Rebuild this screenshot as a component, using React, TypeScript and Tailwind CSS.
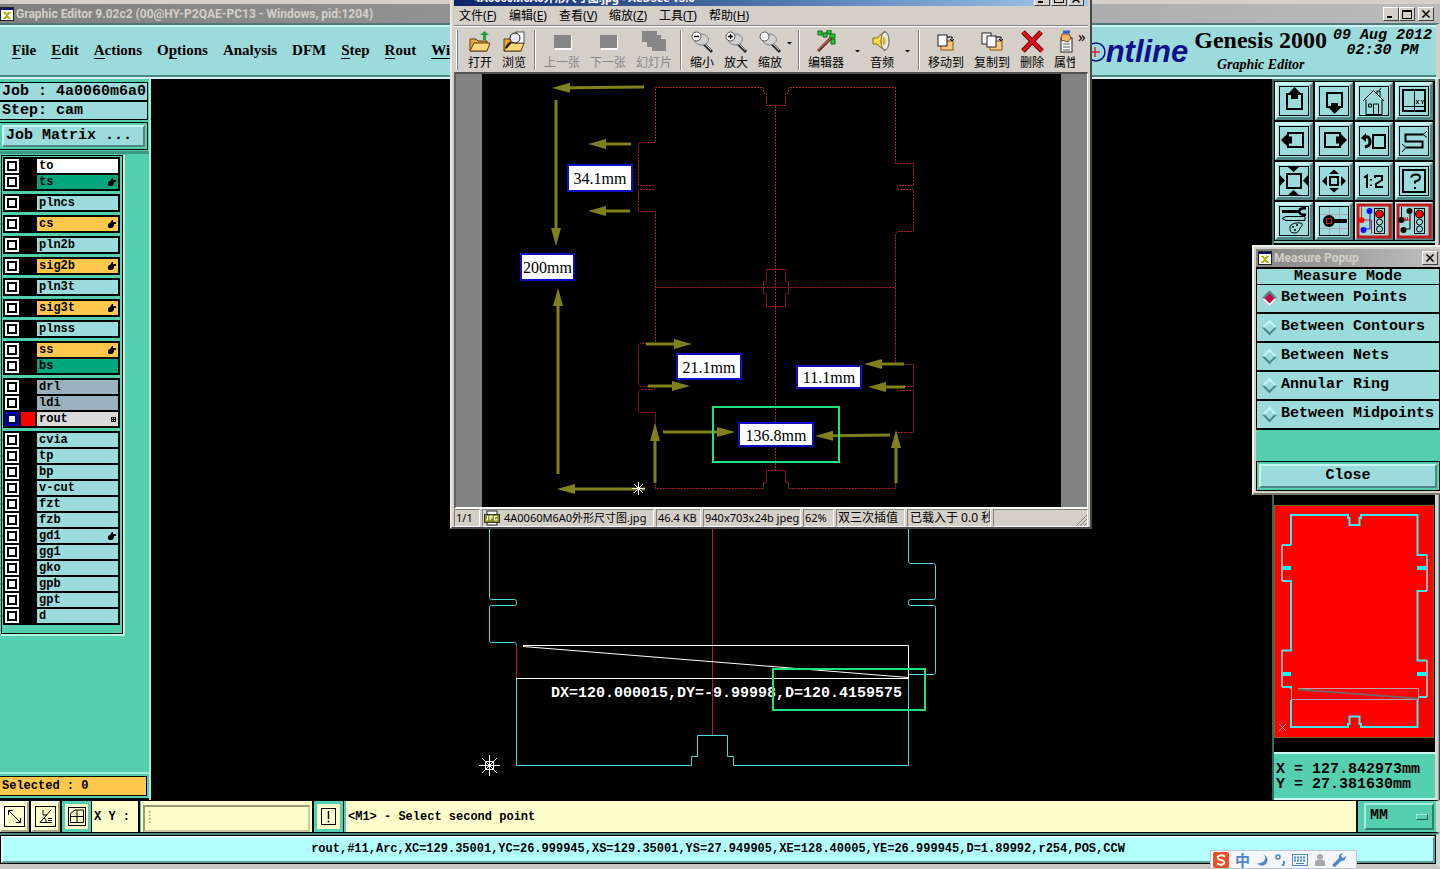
import React from "react";

const MONO = "font-['Liberation_Mono',monospace] font-bold";
const SERIF = "font-['Liberation_Serif',serif] font-bold";
const CJK = "font-['Noto_Sans','Noto_Sans_CJK_SC',sans-serif]";
const RAISED = "border-t-[#c9f5f5] border-l-[#c9f5f5] border-r-[#4e8686] border-b-[#4e8686]";

type Tone = "white" | "green" | "cyan" | "amber" | "slate" | "silver";
type Layer = { name: string; tone: Tone; mark?: "hand" | "grid"; active?: boolean };

const TONES: Record<Tone, string> = {
  white: "bg-white",
  green: "bg-[#00a67c]",
  cyan: "bg-[#9bdbdb]",
  amber: "bg-[#ffc84c]",
  slate: "bg-[#9ab2be]",
  silver: "bg-[#dadada]",
};

const GROUPS: Layer[][] = [
  [{ name: "to", tone: "white" }, { name: "ts", tone: "green", mark: "hand" }],
  [{ name: "plncs", tone: "cyan" }],
  [{ name: "cs", tone: "amber", mark: "hand" }],
  [{ name: "pln2b", tone: "cyan" }],
  [{ name: "sig2b", tone: "amber", mark: "hand" }],
  [{ name: "pln3t", tone: "cyan" }],
  [{ name: "sig3t", tone: "amber", mark: "hand" }],
  [{ name: "plnss", tone: "cyan" }],
  [{ name: "ss", tone: "amber", mark: "hand" }, { name: "bs", tone: "green" }],
  [
    { name: "drl", tone: "slate" },
    { name: "ldi", tone: "slate" },
    { name: "rout", tone: "silver", mark: "grid", active: true },
  ],
  [
    { name: "cvia", tone: "cyan" },
    { name: "tp", tone: "cyan" },
    { name: "bp", tone: "cyan" },
    { name: "v-cut", tone: "cyan" },
    { name: "fzt", tone: "cyan" },
    { name: "fzb", tone: "cyan" },
    { name: "gd1", tone: "cyan", mark: "hand" },
    { name: "gg1", tone: "cyan" },
    { name: "gko", tone: "cyan" },
    { name: "gpb", tone: "cyan" },
    { name: "gpt", tone: "cyan" },
    { name: "d", tone: "cyan" },
  ],
];

function AppGlyph() {
  return (
    <svg className="h-[14px] w-[14px] shrink-0" viewBox="0 0 14 14" shapeRendering="crispEdges">
      <rect width="14" height="14" fill="#fff" />
      <rect width="14" height="3" fill="#10106c" />
      <rect x=".5" y=".5" width="13" height="13" fill="none" stroke="#222" />
      <path d="M4 5l6 7M10 5l-6 7" stroke="#b4b41c" strokeWidth="2" />
    </svg>
  );
}

function WinButton({ label, children }: { label: string; children: React.ReactNode }) {
  return (
    <button
      aria-label={label}
      className="flex h-[14px] w-4 items-center justify-center border border-t-white border-l-white border-r-[#404040] border-b-[#404040] bg-[#d4d0c8]"
    >
      <svg className="h-[10px] w-[12px]" viewBox="0 0 12 10" fill="none" stroke="#000" shapeRendering="crispEdges">
        {children}
      </svg>
    </button>
  );
}

const CLOSE_X = <path d="M2.500 1.500l7 7M9.500 1.500l-7 7" strokeWidth="1.600" shapeRendering="auto" />;

function TitleBar() {
  return (
    <div className="flex h-[23px] items-center gap-[2px] border-t-4 border-[#d4d0c8] bg-linear-to-r from-[#808080] to-[#bcbcbc] pr-[6px]">
      <AppGlyph />
      <span className="flex-1 font-['Roboto',sans-serif] text-[12px] font-bold leading-[18px] whitespace-nowrap text-[#d4d0c8]">
        Graphic Editor 9.02c2 (00@HY-P2QAE-PC13 - Windows, pid:1204)
      </span>
      <div className="flex">
        <WinButton label="Minimize"><path d="M2 8h5" strokeWidth="2" /></WinButton>
        <WinButton label="Maximize"><path d="M1.500 1v8h9V1M1 1h10" /><path d="M1 2h10" /></WinButton>
        <span className="w-[3px]" />
        <WinButton label="Close">{CLOSE_X}</WinButton>
      </div>
    </div>
  );
}

const MENU: [string, string, string][] = [
  ["", "F", "ile"],
  ["", "E", "dit"],
  ["", "A", "ctions"],
  ["O", "p", "tions"],
  ["Analysis", "", ""],
  ["DFM", "", ""],
  ["", "S", "tep"],
  ["", "R", "out"],
  ["", "Wi", "ndows"],
];

function Header() {
  return (
    <header className="flex h-14 items-start border-t-2 border-r-4 border-b-2 border-t-[#4e7a7a] border-r-[#d4d0c8] border-b-[#d8f4f4] bg-[#9bdbdb]">
      <div className="flex h-full w-full items-start border-t-2 border-b-2 border-t-[#c9f5f5] border-b-[#4e8686]">
        <nav className="flex flex-1 gap-[15px] pt-[13px] pl-3">
          {MENU.map(([a, key, b]) => (
            <a key={a + key + b} href="#" className={`${SERIF} text-[15px] leading-5 text-black`}>
              {a}
              <span className="border-b border-black">{key}</span>
              {b}
            </a>
          ))}
        </nav>
        <div className="flex items-center pt-[5px] text-[31px] leading-[40px] font-bold text-[#10108c] italic font-['Liberation_Sans',sans-serif]">
          <span>Fr</span>
          <svg className="h-6 w-6" viewBox="0 0 24 24" fill="none">
            <circle cx="14" cy="12" r="9" stroke="#10108c" strokeWidth="1.500" />
            <path d="M8 12h10M13 7v10" stroke="#e02020" strokeWidth="1.500" />
          </svg>
          <span>ntline</span>
        </div>
        <div className="ml-[6px] flex flex-col items-center text-black">
          <span className={`${SERIF} text-[24px] leading-[27px]`}>Genesis 2000</span>
          <span className={`${SERIF} text-[14px] leading-[22px] italic`}>Graphic Editor</span>
        </div>
        <div className={`${MONO} mr-1 ml-[6px] pt-px text-center text-[15px] leading-[15px] text-black italic`}>
          <div>09 Aug 2012</div>
          <div>02:30 PM</div>
        </div>
      </div>
    </header>
  );
}

function LayerRow({ layer }: { layer: Layer }) {
  return (
    <label className="flex h-[14px] items-center gap-[2px]">
      <input
        type="checkbox"
        aria-label={layer.name}
        className={
          layer.active
            ? "h-[14px] w-[14px] shrink-0 appearance-none bg-white shadow-[inset_0_0_0_2px_#0000b8,inset_0_0_0_4px_#000060]"
            : "h-[14px] w-[14px] shrink-0 appearance-none bg-white shadow-[inset_0_0_0_2px_#fff,inset_0_0_0_4px_#000]"
        }
      />
      <span className={layer.active ? "h-[14px] w-[14px] bg-[#ff0000]" : "h-[14px] w-[14px] bg-black"} />
      <span className={`${MONO} ${TONES[layer.tone]} flex h-[14px] flex-1 items-center justify-between px-[2px] text-[12px] leading-[14px] text-black`}>
        {layer.name}
        {layer.mark === "hand" && (
          <svg className="h-2 w-2" viewBox="0 0 8 8">
            <path d="M0 4l2-1 2-3h1v2h3v2H6v2L4 8H1L0 7z" fill="#000" />
          </svg>
        )}
        {layer.mark === "grid" && (
          <svg className="h-[5px] w-[5px]" viewBox="0 0 5 5" fill="none" stroke="#000" shapeRendering="crispEdges">
            <path d="M.5.5h4v4h-4zM.5 2.500h4M2.500.5v4" />
          </svg>
        )}
      </span>
    </label>
  );
}

function LayerPanel() {
  return (
    <aside className="flex w-[151px] shrink-0 flex-col border-r-2 border-[#a5ecdc] bg-[#54cfb0] pt-[3px] text-black">
      <div className={`${MONO} mr-px text-[15px] leading-[17px]`}>
        <div className="border border-l-0 border-black bg-[#9bdbdb] pl-[2px]">Job : 4a0060m6a0</div>
        <div className="border border-l-0 border-black bg-[#9bdbdb] pl-[2px]">Step: cam</div>
      </div>
      <div className="mt-[2px] mr-px border border-l-0 border-black p-[2px]">
        <button className={`${MONO} ${RAISED} block w-full border-2 bg-[#9bdbdb] pl-[2px] text-left text-[15px] leading-[18px]`}>
          Job Matrix ...
        </button>
      </div>
      <div className="mt-px h-[3px] bg-[#3b9682]" />
      <div className="mt-px ml-px w-[124px] border-r-2 border-b-2 border-[#b5f2e6]">
        <div className="flex flex-col gap-[3px] border border-black p-px pr-[2px] pb-[8px]">
          {GROUPS.map((group) => (
            <div key={group[0].name} className="flex flex-col gap-[2px] bg-black p-[2px]">
              {group.map((layer) => (
                <LayerRow key={layer.name} layer={layer} />
              ))}
            </div>
          ))}
        </div>
      </div>
      <div className="mt-auto border-t-2 border-b-2 border-t-[#a5ecdc] border-b-black pt-[2px] pb-[2px]">
        <div className={`${MONO} mr-[2px] border border-l-0 border-black bg-[#ffc84c] pl-[2px] text-[12px] leading-[18px]`}>Selected : 0</div>
      </div>
    </aside>
  );
}

function Canvas() {
  return (
    <svg className="block min-w-0 flex-1 bg-black" viewBox="151 79 1121 721" preserveAspectRatio="xMidYMid slice" fill="none">
      <g stroke="#4fd8d8" shapeRendering="geometricPrecision">
        <path d="M489.500 500V597.500q0 2 2 2H514.500q2 0 2 2v2q0 2-2 2H491.500q-2 0-2 2V640.500q0 2 2 2H514.500q2 0 2 3" />
        <path d="M516.500 678V765.500H691.500V756.500H697.500V735.500H727.500V756.500H733.500V765.500H908.500V675" />
        <path d="M908.500 500V561.500q0 2 2 2H933.500q2 0 2 2V597.500q0 2-2 2H910.500q-2 0-2 2v2q0 2 2 2H933.500q2 0 2 2V672.500q0 2-2 2H908.500" />
      </g>
      <path d="M712.500 500V735M516.500 646V678" stroke="#b82020" />
      <path d="M523 645.500H908.500V678.500H516.500" stroke="#fff" />
      <path d="M523 646.500L908.500 677.500" stroke="#fff" />
      <text x="551" y="697" fill="#fff" fontSize="15" fontWeight="700" fontFamily="Liberation Mono, monospace">
        DX=120.000015,DY=-9.99998,D=120.4159575
      </text>
      <rect x="773" y="669" width="152" height="41" stroke="#1ee27c" strokeWidth="2" />
      <path d="M479 765.500h21M489.500 755v21M482 758l15 15M497 758l-15 15M485 761.500h9M485 769.500h9M485.500 761v9M493.500 761v9" stroke="#fff" />
    </svg>
  );
}

const FRAME = <rect x="4.500" y="4.500" width="29" height="29" strokeWidth="1" />;
const TOOLS: { label: string; alert?: boolean; art: React.ReactNode }[] = [
  { label: "Pan up", art: <><rect x="12" y="12" width="15" height="15" strokeWidth="2" /><path d="M19.500 5l6 6h-2.500v6h-7v-6H14z" fill="#000" stroke="none" /></> },
  { label: "Pan down", art: <><rect x="12" y="11" width="15" height="14" strokeWidth="2" /><path d="M19.500 32l6-6h-2.500v-5h-7v5H14z" fill="#000" stroke="none" /></> },
  { label: "Home", art: <><path d="M8 19L18.500 8.500 29 19M11 17.500v15h16v-15M22 12V9h3v6M25 8q0-2 1-2M18.500 32V22h5v10M13.500 22h3v3h-3z" /></> },
  { label: "Coordinates", art: <><rect x="8" y="8" width="22" height="21" strokeWidth="2" /><path d="M19.500 8v21M8 24.500h22" /><path d="M21 18l3 4M24 18l-3 4M26 18l1.500 2L29 18M27.500 20v2" /></> },
  { label: "Pan left", art: <><rect x="13" y="11" width="15" height="14" strokeWidth="2" /><path d="M6 18l6-6v2.500h5v7h-5V24z" fill="#000" stroke="none" /></> },
  { label: "Pan right", art: <><rect x="10" y="11" width="15" height="14" strokeWidth="2" /><path d="M32 18l-6-6v2.500h-5v7h5V24z" fill="#000" stroke="none" /></> },
  { label: "Previous view", art: <><rect x="18" y="13" width="12" height="13" strokeWidth="2" /><path d="M10 15q5-1 5 5 0 4-5 5" strokeWidth="3" /><path d="M6 16l5-5v9z" fill="#000" stroke="none" /></> },
  { label: "Serpentine", art: <><path d="M28 12.500H10.500v7H27.500v6H11" strokeWidth="2" /><path d="M28 12.500l4-3.500M28 12.500l4 3M11 25.500L7 22M11 25.500L7 30" /></> },
  { label: "Zoom in", art: <><rect x="12" y="12" width="14" height="14" strokeWidth="2" /><path d="M13 5h11l-5.500 5zM13 33h11l-5.500-5zM5 13v11l5-5.500zM33 13v11l-5-5.500z" fill="#000" stroke="none" /></> },
  { label: "Zoom out", art: <><rect x="15" y="15" width="8" height="8" strokeWidth="2" /><path d="M14 12h10l-5-4.500zM14 26h10l-5 4.500zM12 14v10l-5-5zM26 14v10l5-5z" fill="#000" stroke="none" /></> },
  { label: "Zoom one to two", art: <><path d="M9 15.500l3-2V26M16 17v1.500M16 22.500V24M20 16v-2h7v4l-6 4v3h7" strokeWidth="2" /></> },
  { label: "Help", art: <><rect x="8" y="8" width="22" height="22" strokeWidth="2" /><path d="M16 15.500q1-3 5-3 4 0 4 3 0 3-5 4v2M20 25v2" strokeWidth="2" /></> },
  { label: "Options", art: <><path d="M7 9.500h17" strokeWidth="3" /><path d="M31 6.500q-6-1-7 3 1 4 7 3" strokeWidth="2.500" /><path d="M7 16.500l4-2h19v4H11zM15 24q4-4 11-3 3 1-1 5-1 5-6 5-5 0-4-7z" /><path d="M17 25h2M21 23h2M19 28h2" strokeWidth="1.500" /></> },
  { label: "Snap", art: <><path d="M14.500 5v28M24.500 5v28M5 12.500h28M5 26.500h28" stroke="#a9a9b0" /><circle cx="14" cy="19" r="6" fill="#000" stroke="none" /><path d="M19 19h13" strokeWidth="4" /><rect x="11.500" y="16.500" width="5" height="5" stroke="#c02020" /></> },
  { label: "Net check", alert: true, art: <><path d="M6.500 5v13h10v14" stroke="#e01818" /><circle cx="6.500" cy="18" r="3" fill="#f00" stroke="none" /><path d="M15 9v18H8" stroke="#1010e0" /><circle cx="14.500" cy="9" r="3" fill="#1010ff" stroke="none" /><circle cx="8.500" cy="28" r="3" fill="#1010ff" stroke="none" /><rect x="19.500" y="6.500" width="10" height="25" /><circle cx="24.500" cy="12" r="4" fill="#f00" /><circle cx="24.500" cy="20" r="3" /><circle cx="24.500" cy="27" r="3" /></> },
  { label: "Component check", alert: true, art: <><path d="M15 9v18H8M6.500 5v13h6" /><circle cx="6.500" cy="18" r="3" fill="#000" stroke="none" /><circle cx="14.500" cy="9" r="3" fill="#000" stroke="none" /><circle cx="8.500" cy="28" r="3" fill="#000" stroke="none" /><path d="M9 18h6M10 15v3M12.500 15v3M15 15v3" stroke="#e01818" /><rect x="19.500" y="6.500" width="10" height="25" /><circle cx="24.500" cy="12" r="4" fill="#f00" /><circle cx="24.500" cy="20" r="3" /><circle cx="24.500" cy="27" r="3" /></> },
];

function ToolGrid() {
  return (
    <div className="grid grid-cols-4 gap-[2px] border-t-2 border-b-2 border-t-[#3c7468] border-b-[#8fc9bd] bg-black py-px pr-[2px] pl-px">
      {TOOLS.map((tool) => (
        <button key={tool.label} aria-label={tool.label} className={`${RAISED} h-[38px] border-3 bg-[#9bdbdb]`}>
          <svg className="-m-[3px] block h-[38px] w-[38px]" viewBox="0 0 38 38" fill="none" stroke="#000">
            {tool.alert ? <rect x="3" y="3" width="32" height="32" stroke="#c41818" strokeWidth="3" /> : FRAME}
            {tool.art}
          </svg>
        </button>
      ))}
    </div>
  );
}

function MiniMap() {
  return (
    <div className="mt-auto pr-px">
      <svg className="block w-full bg-[#ff0000]" viewBox="1274 505 160 233" fill="none">
        <rect x="1274.500" y="505.500" width="159" height="232" stroke="#7a6a10" />
        <g stroke="#3fe8ec" strokeWidth="2">
          <path d="M1291 545V515H1348V518H1349.500V525H1359.500V518H1361V515H1417.500V555H1427M1427 591H1417.500V660.500H1427M1427 697H1419M1417.500 700V727H1361V724H1359.500V716.500H1349.500V724H1348V727H1291V700" />
          <path d="M1282 545H1291M1282 581H1291V650.500H1282M1282 687H1291V689" />
          <path d="M1282 568h9M1417 568h10M1282 674h9M1417 674h10" stroke="#00ffff" strokeWidth="4" />
          <path d="M1298 689h12" />
        </g>
        <g stroke="#b4a8a8" strokeWidth="2">
          <path d="M1282 545v36M1282 650v37M1427 555v36M1427 660v37" />
          <path d="M1298 688.500H1418.500V699.500H1291.500V688" strokeWidth="1" />
        </g>
        <path d="M1298 689.500L1418 698.500" stroke="#7c6060" strokeWidth="2" />
        <path d="M1279 724l7 7M1286 724l-7 7" stroke="#d8a0a0" />
      </svg>
    </div>
  );
}

function RightPanel() {
  return (
    <aside className="flex w-[168px] shrink-0 border-l-2 border-[#2c6c5c] bg-black">
      <div className="flex flex-1 flex-col">
        <ToolGrid />
        <MiniMap />
        <div className={`${MONO} mt-[14px] border-t-2 border-b-2 border-t-[#c9f5f5] border-b-[#c9f5f5] bg-[#54cfb0] pt-2 pb-[6px] pl-[2px] text-[15px] leading-[15px] whitespace-pre text-black`}>
          <div>X = 127.842973mm</div>
          <div>Y = 27.381630mm</div>
        </div>
      </div>
      <div className="w-[5px] border-r border-l-3 border-r-[#404040] border-l-[#cfd8d4] bg-[#a0a0a0]" />
    </aside>
  );
}

function SmallTool({ label, on, children }: { label: string; on?: boolean; children: React.ReactNode }) {
  return (
    <button
      aria-label={label}
      className={
        on
          ? "flex h-[31px] w-[29px] shrink-0 items-center justify-center border-3 border-[#54cfb0] bg-[#ffffcc]"
          : "flex h-[31px] w-[29px] shrink-0 items-center justify-center border-2 border-t-white border-l-white border-r-[#a8a884] border-b-[#a8a884] bg-[#ffffcc]"
      }
    >
      <svg className="h-[21px] w-[21px] shrink-0" viewBox="0 0 21 21" fill="none" stroke="#000">
        {children}
      </svg>
    </button>
  );
}

function CommandRow() {
  return (
    <div className="flex h-[33px] gap-[2px] border-t border-r-4 border-b border-black border-r-[#cfd8d4] bg-black text-black">
      <SmallTool label="Snap mode"><rect x=".5" y=".5" width="20" height="20" /><path d="M5 5l11 11M4.500 9V4.500H9M12 16.500h4.500V12" /></SmallTool>
      <SmallTool label="Angle mode"><rect x=".5" y=".5" width="20" height="20" /><path d="M16 4L5 16.500h12M8 4v5h4M9 12q3 1 2 4M13 12.500h4M13 14.500h4" /></SmallTool>
      <SmallTool label="Grid mode" on><rect x="2.500" y="1.500" width="17" height="18" /><path d="M4.500 7.500L9 4h8.500v12.500h-13zM11 4v12.500M4.500 10.500h13" /></SmallTool>
      <label htmlFor="xy" className={`${MONO} -ml-px flex w-[46px] shrink-0 items-center bg-[#ffffcc] pl-[2px] text-[12px]`}>X Y :</label>
      <div className="w-[172px] shrink-0 border-l border-[#54cfb0] bg-[#ffffcc] p-[2px]">
        <input
          id="xy"
          className={`${MONO} h-full w-full border-2 border-t-[#98986c] border-l-[#98986c] border-r-[#c8c8a0] border-b-[#c8c8a0] bg-[#ffffcc] px-px text-[12px] outline-none`}
          placeholder="┊"
        />
      </div>
      <SmallTool label="Interrupt" on><rect x="3.500" y="2.500" width="14" height="16" /><path d="M10.500 5v8M10.500 14.500v2" strokeWidth="1.500" /></SmallTool>
      <div className={`${MONO} -ml-px flex flex-1 items-center border-l-2 border-[#54cfb0] bg-[#ffffcc] pl-[2px] text-[12px]`}>{"<M1> - Select second point"}</div>
      <div className="w-[78px] bg-[#54cfb0] py-[2px] pr-[2px] pl-[6px]">
        <button className={`${MONO} flex h-full w-full items-center justify-between border-2 border-t-[#a5ecdc] border-l-[#a5ecdc] border-r-[#32806c] border-b-[#32806c] px-1 text-[15px]`}>
          MM
          <span className="h-[6px] w-3 border border-t-[#a5ecdc] border-l-[#a5ecdc] border-r-[#205c4c] border-b-[#205c4c]" />
        </button>
      </div>
    </div>
  );
}

function StatusRow() {
  return (
    <div className="h-9 border-t-2 border-r-4 border-b-[5px] border-t-[#4e8686] border-r-[#cfd8d4] border-b-[#c8c8c0] bg-[#b2ffff]">
      <div className="h-full border border-black">
        <div className={`${MONO} h-full border-2 border-t-[#e0ffff] border-l-[#e0ffff] border-r-[#5c9c9c] border-b-[#5c9c9c] text-center text-[12px] leading-[23px] text-black`}>
          rout,#11,Arc,XC=129.35001,YC=26.999945,XS=129.35001,YS=27.949905,XE=128.40005,YE=26.999945,D=1.89992,r254,POS,CCW
        </div>
      </div>
    </div>
  );
}

const FOLDER = <><path d="M2 9h6l2 2h9v10H2z" fill="#e8a83c" stroke="#5c3c0c" /><path d="M2 21l4-8h16l-3 8z" fill="#ffd87c" stroke="#5c3c0c" /></>;
const LENS = <><path d="M13 13l9 9" stroke="#303030" strokeWidth="3" /><path d="M13 12l8 8" stroke="#c0c0c0" strokeWidth="1" /><ellipse cx="11.500" cy="9.500" rx="7" ry="5.500" fill="#d0d0cc" stroke="#808080" /><circle cx="6.500" cy="6.500" r="4.500" fill="#fff" stroke="#505050" /></>;

const ICONS: Record<string, React.ReactNode> = {
  打开: <>{FOLDER}<path d="M15 10V5h-3l4.500-4L21 5h-3v5z" fill="#20a040" /></>,
  浏览: <>{FOLDER}<rect x="14" y="2" width="8" height="11" fill="#fff" stroke="#555" /><circle cx="13" cy="8" r="5" fill="#eef" stroke="#222" /><path d="M9 12l-5 6" stroke="#222" strokeWidth="2" /></>,
  上一张: <><path d="M5 6h17v14H5z" fill="#fff" /><path d="M4 5h17v13H4z" fill="#868686" /></>,
  下一张: <><path d="M5 6h17v14H5z" fill="#fff" /><path d="M4 5h17v13H4z" fill="#868686" /></>,
  幻灯片: <path d="M0 1h15v4h4v4h5v12H10v-4H5v-5H0z" fill="#868686" />,
  缩小: <>{LENS}<path d="M4 6.500h5" stroke="#000" strokeWidth="1.500" /></>,
  放大: <>{LENS}<path d="M4 6.500h5M6.500 4v5" stroke="#000" strokeWidth="1.500" /></>,
  缩放: LENS,
  编辑器: <><path d="M4 21L18 7" stroke="#702020" strokeWidth="3" /><path d="M4 20L17 8" stroke="#e08080" /><path d="M4 1h4v4H4zM9 3h4v4H9zM13 0h4v4h-4zM16 4h5v4h-5zM17 9h4v5h-4z" fill="#20d030" stroke="#106018" /></>,
  音频: <><path d="M3 8h4l8-7v20l-8-7H3z" fill="#ffe040" stroke="#806010" /><ellipse cx="15" cy="11" rx="4" ry="9" fill="#e8e8e8" stroke="#606060" /><ellipse cx="14" cy="11" rx="1.500" ry="4" fill="#e0b020" /></>,
  移动到: <><rect x="7" y="11" width="12" height="9" fill="#ffc878" stroke="#805018" /><rect x="4" y="5" width="9" height="11" fill="#fff" stroke="#222" /><path d="M13 7h5v4M16 9l2 2 2-2" stroke="#000" /></>,
  复制到: <><rect x="10" y="11" width="12" height="9" fill="#ffc878" stroke="#805018" /><rect x="2" y="3" width="9" height="11" fill="#fff" stroke="#222" /><rect x="7" y="6" width="9" height="11" fill="#fff" stroke="#222" /><path d="M16 7h5v4M19 9l2 2 2-2" stroke="#000" /></>,
  删除: <><path d="M3 2l19 19M21 2L3 21" stroke="#600" strokeWidth="5" /><path d="M3 2l19 19M21 2L3 21" stroke="#e01018" strokeWidth="3" /></>,
  属性: <><rect x="7" y="8" width="11" height="14" fill="#fff" stroke="#222" /><path d="M9 14h7M9 17h7M9 20h7" stroke="#555" /><path d="M8 4h7l2 4-3 4-7-2z" fill="#f0b868" stroke="#704818" /><path d="M9 2h7" stroke="#3060c0" strokeWidth="3" /></>,
};

function ToolButton({ name, dim }: { name: string; dim?: boolean }) {
  return (
    <button
      className={`${CJK} ${dim ? "text-[#868686]" : "text-black"} ${name.length === 3 ? "w-[46px]" : "w-[34px]"} flex shrink-0 flex-col items-center text-[12px] leading-[18px] whitespace-nowrap`}
    >
      <svg className="h-6 w-6" viewBox="0 0 24 24" fill="none">{ICONS[name]}</svg>
      <span>{name}</span>
    </button>
  );
}

function Caret() {
  return (
    <svg className="mt-[14px] h-4 w-4 shrink-0" viewBox="0 0 16 16"><path d="M6 6h5L8.500 8.500z" fill="#000" /></svg>
  );
}

function Divider() {
  return <span className="mx-[3px] h-10 w-[2px] shrink-0 border-r border-l border-r-white border-l-[#808080]" />;
}

type Arrow = { tip: [number, number]; tail: [number, number] };
const ARROWS: Arrow[] = [
  { tip: [552, 88], tail: [644, 87] },
  { tip: [556, 246], tail: [556, 100] },
  { tip: [588, 144], tail: [631, 144] },
  { tip: [588, 211], tail: [630, 211] },
  { tip: [558, 288], tail: [558, 474] },
  { tip: [692, 344], tail: [646, 344] },
  { tip: [690, 386], tail: [648, 386] },
  { tip: [864, 364], tail: [904, 364] },
  { tip: [868, 387], tail: [905, 387] },
  { tip: [655, 423], tail: [655, 483] },
  { tip: [896, 430], tail: [896, 483] },
  { tip: [735, 432], tail: [663, 432] },
  { tip: [815, 436], tail: [890, 435] },
  { tip: [557, 489], tail: [645, 489] },
];

function arrowParts({ tip, tail }: Arrow) {
  const dx = tip[0] - tail[0];
  const dy = tip[1] - tail[1];
  const len = Math.hypot(dx, dy);
  const ux = dx / len;
  const uy = dy / len;
  const bx = tip[0] - ux * 18;
  const by = tip[1] - uy * 18;
  return {
    shaft: `M${tail[0]} ${tail[1]}L${bx + ux} ${by + uy}`,
    head: `${tip[0]},${tip[1]} ${bx - uy * 5},${by + ux * 5} ${bx + uy * 5},${by - ux * 5}`,
  };
}

const DIMS: [number, number, number, number, string][] = [
  [568, 165, 64, 26, "34.1mm"],
  [521, 254, 53, 26, "200mm"],
  [677, 354, 64, 25, "21.1mm"],
  [797, 366, 64, 22, "11.1mm"],
  [739, 423, 74, 23, "136.8mm"],
];

function Drawing() {
  return (
    <svg className="mx-[26px] block bg-black" viewBox="482 74 579 433" fill="none">
      <g stroke="#b02424" strokeDasharray="2 1">
        <path d="M655.500 142V87.500H763.500V93.500H766.500V105.500H785.500V93.500H788.500V87.500H895.500V163.500H913.500V185.500H898.500q-3 2 0 4H913.500V231.500H898.500q-3 0-3 3V364.500H913.500V386.500H898.500q-3 2 0 4H913.500V432.500H895.500V488.500H788.500V482.500H785.500V470.500H766.500V482.500H763.500V488.500H655.500V412.500H641.500q-3 0-3-3V392.500q0-3 3-3H653.500q3-1 0-3H641.500q-3 0-3-3V346.500q0-3 3-3H655.500V211.500H638.500V189.500H653.500q3-2 0-4H638.500V145.500q0-3 3-3H655.500" />
        <path d="M775.500 106V470M655.500 287.500H895.500" />
        <path d="M766.500 269.500H785.500V281.500H788.500V293.500H785.500V306.500H766.500V293.500H763.500V281.500H766.500z" />
      </g>
      {ARROWS.map((a) => {
        const { shaft, head } = arrowParts(a);
        return (
          <g key={head}>
            <path d={shaft} stroke="#80801c" strokeWidth="3" />
            <polygon points={head} fill="#80801c" />
          </g>
        );
      })}
      {DIMS.map(([x, y, w, h, label]) => (
        <g key={label}>
          <rect x={x} y={y} width={w} height={h} fill="#fff" stroke="#0c0cc4" strokeWidth="2" />
          <text x={x + w / 2} y={y + h / 2 + 6} textAnchor="middle" fill="#000" fontSize="16" fontFamily="Liberation Serif, serif">{label}</text>
        </g>
      ))}
      <rect x="713" y="407" width="126" height="55" stroke="#1ee27c" strokeWidth="2" />
      <path d="M632 488.500h13M638.500 482v13M634 484l9 9M643 484l-9 9" stroke="#fff" />
    </svg>
  );
}

const SUNKEN = "border border-t-[#808080] border-l-[#808080] border-r-white border-b-white";

function ImageViewer() {
  return (
    <section className={`${CJK} absolute top-0 left-[450px] w-[642px] border-r-2 border-b-2 border-l-2 border-l-[#ece8e0] border-r-[#484848] border-b-[#484848] bg-[#d4d0c8] px-[2px] text-[12px] text-black`}>
      <div className="flex h-[6px] items-end overflow-hidden bg-linear-to-r from-[#0a246a] to-[#a6caf0] pl-5 text-[11px] font-bold text-white">
        <span className="flex-1 whitespace-nowrap">4A0060M6A0外形尺寸图.jpg - ACDSee v3.0</span>
        <div className="flex gap-px pr-1">
          <WinButton label="Minimize viewer"><path d="M2 8h5" strokeWidth="2" /></WinButton>
          <WinButton label="Maximize viewer"><path d="M1.500 1.500h9v7h-9z" /></WinButton>
          <WinButton label="Close viewer">{CLOSE_X}</WinButton>
        </div>
      </div>
      <nav className="flex h-5 border-b border-[#808080] pl-[5px] leading-[19px]">
        {[["文件", "F"], ["编辑", "E"], ["查看", "V"], ["缩放", "Z"], ["工具", "T"], ["帮助", "H"]].map(([t, k]) => (
          <a key={t} href="#" className="w-[50px] whitespace-nowrap">{t}(<u>{k}</u>)</a>
        ))}
      </nav>
      <div className="flex h-[46px] items-start overflow-hidden border-t border-white pt-[3px]">
        <span className="mr-[5px] ml-[2px] h-10 w-[2px] border-r border-l border-r-[#808080] border-l-white" />
        <ToolButton name="打开" />
        <ToolButton name="浏览" />
        <Divider />
        <ToolButton name="上一张" dim />
        <ToolButton name="下一张" dim />
        <ToolButton name="幻灯片" dim />
        <Divider />
        <ToolButton name="缩小" />
        <ToolButton name="放大" />
        <div className="flex w-[42px] shrink-0 overflow-hidden">
          <ToolButton name="缩放" />
          <svg className="mt-2 -ml-1 h-3 w-3 shrink-0" viewBox="0 0 12 12"><path d="M4 4h5L6.500 6.500z" fill="#000" /></svg>
        </div>
        <Divider />
        <ToolButton name="编辑器" />
        <Caret />
        <ToolButton name="音频" />
        <Caret />
        <Divider />
        <ToolButton name="移动到" />
        <ToolButton name="复制到" />
        <ToolButton name="删除" />
        <div className="flex w-[26px] shrink-0 overflow-hidden"><ToolButton name="属性" /></div>
        <span className="pl-[3px] text-[15px] leading-[12px]">»</span>
      </div>
      <div className="border-t-2 border-l-2 border-r border-b-2 border-t-[#505050] border-l-[#606060] border-r-white border-b-white bg-[#828282]">
        <Drawing />
      </div>
      <footer className="flex h-[18px] gap-[2px] overflow-hidden text-[11px] leading-4 whitespace-nowrap">
        <span className={`${SUNKEN} w-[26px] px-px`}>1/1</span>
        <span className={`${SUNKEN} flex w-[172px] items-center gap-1 px-px`}>
          <svg className="h-4 w-4 shrink-0" viewBox="0 0 16 16">
            <rect x="3" y="1" width="10" height="14" fill="#fff" stroke="#222" />
            <rect x=".5" y="4.500" width="15" height="8" fill="#90901c" stroke="#333" />
            <path d="M3.500 6v4H2M6 10V6h2v2H6M13 6.500h-2.500v3.500H13V8.500" fill="none" stroke="#fff" />
          </svg>
          4A0060M6A0外形尺寸图.jpg
        </span>
        <span className={`${SUNKEN} w-[45px] px-px`}>46.4 KB</span>
        <span className={`${SUNKEN} w-[98px] px-px`}>940x703x24b jpeg</span>
        <span className={`${SUNKEN} w-[31px] px-px`}>62%</span>
        <span className={`${SUNKEN} w-[69px] px-px text-[12px]`}>双三次插值</span>
        <span className={`${SUNKEN} w-[84px] overflow-hidden px-[2px] text-[12px]`}>已载入于 0.0 秒</span>
        <span className={`${SUNKEN} flex flex-1 items-end justify-end`}>
          <svg className="h-3 w-3" viewBox="0 0 12 12" stroke="#808080"><path d="M1 12L12 1M5 12l7-7M9 12l3-3" /></svg>
        </span>
      </footer>
    </section>
  );
}

const MODES = ["Between Points", "Between Contours", "Between Nets", "Annular Ring", "Between Midpoints"];

function MeasurePopup() {
  return (
    <section className="absolute top-[245px] right-0 w-[188px] border-2 border-r-0 border-t-[#f0f0ec] border-l-[#f0f0ec] border-b-[#787870] bg-[#d4d0c8] pt-[2px] pb-[2px] pl-[2px] text-black">
      <div className="flex h-[18px] items-center gap-[2px] bg-linear-to-r from-[#858585] to-[#c0c0c0] px-[2px]">
        <AppGlyph />
        <span className="flex-1 font-['Roboto',sans-serif] text-[12px] font-bold text-[#d4d0c8]">Measure Popup</span>
        <WinButton label="Close popup">{CLOSE_X}</WinButton>
      </div>
      <fieldset className={`${MONO} min-w-0 border border-t-2 border-black bg-[#9bdbdb] text-[15px]`}>
        <div className="text-center leading-[15px]">Measure Mode</div>
        {MODES.map((mode, i) => (
          <label key={mode} className="flex h-[29px] items-center gap-[6px] border-t border-b border-black pl-[7px] whitespace-nowrap">
            <input
              type="radio"
              name="mode"
              defaultChecked={i === 0}
              className="h-[11px] w-[11px] shrink-0 rotate-45 appearance-none border-2 border-t-[#c9f5f5] border-l-[#c9f5f5] border-r-[#4e8686] border-b-[#4e8686] checked:border-t-[#4e8686] checked:border-l-[#4e8686] checked:border-r-[#e8ffff] checked:border-b-[#e8ffff] checked:bg-[#d00048]"
            />
            {mode}
          </label>
        ))}
      </fieldset>
      <div className="bg-[#54cfb0] pt-[31px]">
        <div className="border border-black p-[2px]">
          <button className={`${MONO} ${RAISED} block w-full border-2 bg-[#9bdbdb] text-[15px] leading-5`}>Close</button>
        </div>
      </div>
    </section>
  );
}

function ImeBar() {
  return (
    <div className="absolute right-[83px] bottom-0 flex h-[19px] w-[147px] items-center gap-[6px] border border-[#b8c8d8] bg-[#f4f6fa] px-[2px] text-[#4a86cc]">
      <svg className="h-4 w-4 shrink-0" viewBox="0 0 16 16">
        <rect width="16" height="16" rx="2" fill="#ec5020" />
        <path d="M12 4.500Q8 2 5 4.500q-1 3 3 3.500 4 1 3 3.500-3 2.500-7 0" fill="none" stroke="#fff" strokeWidth="2" />
      </svg>
      <span className="font-['Noto_Sans_CJK_SC',sans-serif] text-[15px] leading-4 font-bold">中</span>
      <svg className="h-3 w-3 shrink-0" viewBox="0 0 12 12"><path d="M7 0q4 3 1 7-3 3-7 2 4 5 9 1 4-6-3-10z" fill="currentColor" /></svg>
      <svg className="h-3 w-3 shrink-0" viewBox="0 0 12 12" fill="none" stroke="currentColor"><circle cx="4" cy="3" r="2" strokeWidth="1.500" /><path d="M10 7v2q0 2-2 3" strokeWidth="2" /></svg>
      <svg className="h-3 w-4 shrink-0" viewBox="0 0 16 12" fill="none" stroke="currentColor"><rect x=".5" y=".5" width="15" height="11" /><path d="M2 3.500h12M2 6.500h12" strokeDasharray="2 1" strokeWidth="2" /><path d="M4 9.500h8" /></svg>
      <svg className="h-3 w-3 shrink-0" viewBox="0 0 12 12" fill="#a8a8a8"><circle cx="6" cy="3" r="3" /><path d="M1 12V8q0-2 2-2h6q2 0 2 2v4z" /></svg>
      <svg className="h-[14px] w-[14px] shrink-0" viewBox="0 0 14 14"><path d="M1 11l6-6q-1-4 4-5L9 3l2 2 3-2q0 5-5 5l-6 6q-3 0-2-3z" fill="currentColor" /></svg>
    </div>
  );
}

export default function App() {
  return (
    <div className="relative flex min-h-screen flex-col overflow-hidden bg-black">
      <TitleBar />
      <Header />
      <main className="flex flex-1">
        <LayerPanel />
        <Canvas />
        <RightPanel />
      </main>
      <CommandRow />
      <StatusRow />
      <ImageViewer />
      <MeasurePopup />
      <ImeBar />
    </div>
  );
}
